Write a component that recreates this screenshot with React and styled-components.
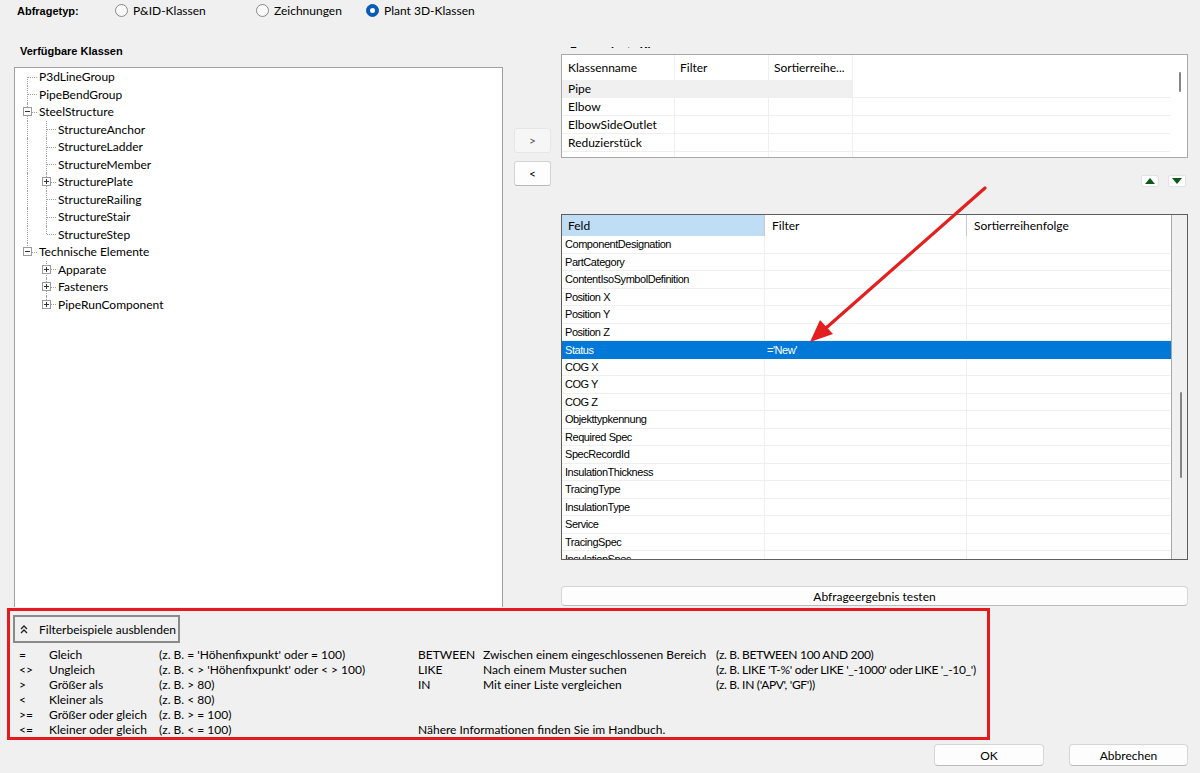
import React from 'react';
import styled, { createGlobalStyle } from 'styled-components';

const GlobalStyle = createGlobalStyle`
  html, body { margin: 0; padding: 0; background: #f0f0f0; }
  body { font-family: Lato, "Noto Sans", sans-serif; font-size: 12px; color: #000; }
  * { box-sizing: border-box; }
`;

const Window = styled.div`
  position: relative;
  width: 1200px;
  height: 773px;
  overflow: hidden;
  background: #f0f0f0;
  display: flex;
  flex-direction: column;
`;

/* ---------- Top bar ---------- */
const TopBar = styled.div`
  height: 21px;
  display: flex;
  align-items: center;
  padding-left: 17px;
`;
const BoldLabel = styled.span`
  font-family: "Liberation Sans", Arial, sans-serif;
  font-weight: 700;
  font-size: 11px;
  width: ${p => p.$w || 'auto'};
  flex: none;
`;
const RadioOption = styled.label`
  display: flex;
  align-items: center;
  gap: 5px;
  width: ${p => p.$w};
  flex: none;
  font-size: 12px;
`;
const RadioCircle = styled.span`
  width: 13px;
  height: 13px;
  border-radius: 50%;
  border: 1px solid ${p => (p.$checked ? '#0a5ab8' : '#8a8a8a')};
  background: ${p => (p.$checked ? '#0a5ab8' : '#f9f9f9')};
  display: flex;
  align-items: center;
  justify-content: center;
  &::after {
    content: '';
    width: 5px;
    height: 5px;
    border-radius: 50%;
    background: #fff;
    display: ${p => (p.$checked ? 'block' : 'none')};
  }
`;

/* ---------- Main grid ---------- */
const MainGrid = styled.div`
  margin-top: 15px;
  padding-left: 14px;
  display: grid;
  grid-template-columns: 489px 58px 627px;
  height: 571px;
`;
const LeftCol = styled.div`
  display: flex;
  flex-direction: column;
`;
const SectionLabel = styled.div`
  height: 31px;
  padding: 7px 0 0 6px;
`;
const TreeBox = styled.div`
  height: 540px;
  background: #fff;
  border: 1px solid #a0a0a0;
  border-bottom: none;
  padding-left: 3px;
  overflow: hidden;
`;
const TreeRow = styled.div`
  height: 17.5px;
  display: flex;
  align-items: stretch;
`;
const GuideCell = styled.span`
  position: relative;
  width: 19px;
  flex: none;
  &::before {
    content: '';
    position: absolute;
    left: 9px;
    top: 0;
    bottom: 0;
    border-left: 1px dotted #a0a0a0;
    display: ${p => (p.$line ? 'block' : 'none')};
  }
`;
const ConnectorCell = styled.span`
  position: relative;
  width: 19px;
  flex: none;
  display: flex;
  align-items: center;
  padding-left: 5px;
  &::before {
    content: '';
    position: absolute;
    left: 9px;
    top: ${p => (p.$first ? '50%' : '0')};
    bottom: ${p => (p.$last ? '50%' : '0')};
    border-left: 1px dotted #a0a0a0;
  }
  &::after {
    content: '';
    position: absolute;
    left: 10px;
    right: 0;
    top: 50%;
    border-top: 1px dotted #a0a0a0;
  }
`;
const Expander = styled.svg`
  position: relative;
  z-index: 1;
  width: 9px;
  height: 9px;
  display: block;
`;
const TreeText = styled.span`
  margin-left: 2px;
  display: flex;
  align-items: center;
  white-space: nowrap;
  font-size: 12px;
`;

const MidCol = styled.div`
  padding: 92px 0 0 11px;
  display: flex;
  flex-direction: column;
  gap: 8px;
`;
const MoveButton = styled.button`
  width: 37px;
  height: 25px;
  font-family: Lato, sans-serif;
  font-size: 12px;
  padding: 0;
  border-radius: 3px;
  background: ${p => (p.$disabled ? '#f6f6f6' : '#fdfdfd')};
  border: 1px solid ${p => (p.$disabled ? '#e6e6e6' : '#d4d4d4')};
  border-bottom-color: ${p => (p.$disabled ? '#e6e6e6' : '#b8b8b8')};
  color: ${p => (p.$disabled ? '#555' : '#000')};
`;

const RightCol = styled.div`
  display: flex;
  flex-direction: column;
`;
const HiddenLabelWrap = styled.div`
  height: 18px;
  padding: 9px 0 0 9px;
`;
const HiddenLabelClip = styled.div`
  height: 3px;
  overflow: hidden;
  font-family: "Liberation Sans", Arial, sans-serif;
  font-weight: 700;
  font-size: 11px;
  line-height: 14px;
  & > span { display: block; margin-top: -1px; }
`;

/* ---------- Tables ---------- */
const TableBox = styled.div`
  height: ${p => p.$h}px;
  margin-top: ${p => p.$mt || 0}px;
  background: #fff;
  border: 1px solid ${p => p.$border};
  display: flex;
  overflow: hidden;
  flex: none;
`;
const TableBody = styled.div`
  flex: 1;
  display: flex;
  flex-direction: column;
  overflow: hidden;
`;
const Row = styled.div`
  display: flex;
  flex: none;
  height: ${p => p.$h}px;
  border-bottom: ${p => (p.$line ? '1px solid #efefef' : 'none')};
`;
const Cell = styled.div`
  width: ${p => (p.$w ? `${p.$w}px` : 'auto')};
  flex: ${p => (p.$w ? 'none' : '1')};
  display: flex;
  align-items: center;
  padding-left: ${p => p.$pl || 3}px;
  white-space: nowrap;
  overflow: hidden;
  border-right: ${p => (p.$noline ? 'none' : `1px solid ${p.$lc || '#efefef'}`)};
  background: ${p => p.$bg || 'transparent'};
  color: ${p => p.$color || '#000'};
  font-family: ${p => (p.$narrow ? '"Liberation Sans", Arial, sans-serif' : 'Lato, sans-serif')};
  font-size: ${p => (p.$narrow ? '11px' : '12px')};
  letter-spacing: ${p => (p.$narrow ? '-0.45px' : '0')};
`;
const ScrollTrack = styled.div`
  width: ${p => p.$w}px;
  flex: none;
  background: ${p => p.$bg};
  border-left: ${p => (p.$edge ? '1px solid #a8a8a8' : 'none')};
  display: flex;
  flex-direction: column;
  align-items: center;
  padding-left: ${p => p.$pl || 0}px;
`;
const Thumb = styled.div`
  width: 2px;
  margin-top: ${p => p.$top}px;
  height: ${p => p.$h}px;
  background: #858585;
  border-radius: 1px;
`;

const OrderRow = styled.div`
  margin-top: 17px;
  height: 12px;
  display: flex;
  justify-content: flex-end;
  gap: 9px;
  padding-right: 2px;
  flex: none;
`;
const OrderButton = styled.button`
  width: 18px;
  height: 12px;
  padding: 0;
  border: 1px solid #e2e2e2;
  border-radius: 2px;
  background: #fdfdfd;
  display: flex;
  align-items: center;
  justify-content: center;
`;

const WideButton = styled.button`
  margin-top: 26px;
  height: 20px;
  width: 100%;
  flex: none;
  font-family: Lato, sans-serif;
  font-size: 12px;
  background: #fdfdfd;
  border: 1px solid #d6d6d6;
  border-bottom-color: #bcbcbc;
  border-radius: 4px;
  padding: 0;
`;

/* ---------- Filter examples ---------- */
const RedBox = styled.div`
  margin: 1px 0 0 7px;
  width: 983px;
  height: 132px;
  border: 3px solid #e31b1f;
  padding: 4px 0 0 3px;
  flex: none;
`;
const ToggleButton = styled.button`
  width: 167px;
  height: 28px;
  border: 2px solid #8a8a8a;
  background: #f0f0f0;
  font-family: Lato, sans-serif;
  font-size: 12px;
  display: flex;
  align-items: center;
  gap: 11px;
  padding: 0 0 0 5px;
`;
const ExampleGrid = styled.div`
  margin-top: 4px;
  padding-left: 6px;
  display: grid;
  grid-template-columns: 30px 110px 259px 65px 233px auto;
  grid-auto-rows: 15px;
  line-height: 15px;
  font-size: 12px;
  white-space: nowrap;
`;
const ExampleText = styled.span`
  letter-spacing: ${p => (p.$tight ? '-0.3px' : '0')};
`;
const Span3 = styled.span`
  grid-column: 4 / span 3;
`;

const Footer = styled.div`
  margin-top: 4px;
  display: flex;
  justify-content: flex-end;
  gap: 25px;
  padding-right: 12px;
`;
const DialogButton = styled.button`
  width: ${p => p.$w}px;
  height: 22px;
  font-family: Lato, sans-serif;
  font-size: 12px;
  background: #fdfdfd;
  border: 1px solid #d6d6d6;
  border-bottom-color: #bcbcbc;
  border-radius: 4px;
  padding: 0;
`;

const ArrowOverlay = styled.svg`
  position: absolute;
  left: 0;
  top: 0;
  width: 1200px;
  height: 773px;
  pointer-events: none;
`;

/* ---------- Data ---------- */
const tree = [
  { label: 'P3dLineGroup', level: 0, first: true },
  { label: 'PipeBendGroup', level: 0 },
  { label: 'SteelStructure', level: 0, exp: '-' },
  { label: 'StructureAnchor', level: 1 },
  { label: 'StructureLadder', level: 1 },
  { label: 'StructureMember', level: 1 },
  { label: 'StructurePlate', level: 1, exp: '+' },
  { label: 'StructureRailing', level: 1 },
  { label: 'StructureStair', level: 1 },
  { label: 'StructureStep', level: 1, last: true },
  { label: 'Technische Elemente', level: 0, exp: '-', last: true },
  { label: 'Apparate', level: 1, exp: '+', parentLast: true },
  { label: 'Fasteners', level: 1, exp: '+', parentLast: true },
  { label: 'PipeRunComponent', level: 1, exp: '+', parentLast: true, last: true },
];

const classes = ['Pipe', 'Elbow', 'ElbowSideOutlet', 'Reduzierstück', ''];

const fields = [
  'ComponentDesignation', 'PartCategory', 'ContentIsoSymbolDefinition', 'Position X',
  'Position Y', 'Position Z', 'Status', 'COG X', 'COG Y', 'COG Z', 'Objekttypkennung',
  'Required Spec', 'SpecRecordId', 'InsulationThickness', 'TracingType', 'InsulationType',
  'Service', 'TracingSpec', 'InsulationSpec',
];

const examples = [
  ['=', 'Gleich', "(z. B. = 'Höhenfixpunkt' oder = 100)", 'BETWEEN', 'Zwischen einem eingeschlossenen Bereich', '(z. B. BETWEEN 100 AND 200)'],
  ['<>', 'Ungleich', "(z. B. < > 'Höhenfixpunkt' oder < > 100)", 'LIKE', 'Nach einem Muster suchen', "(z. B. LIKE 'T-%' oder LIKE '_-1000' oder LIKE '_-10_')"],
  ['>', 'Größer als', '(z. B. > 80)', 'IN', 'Mit einer Liste vergleichen', "(z. B. IN ('APV', 'GF'))"],
  ['<', 'Kleiner als', '(z. B. < 80)', '', '', ''],
  ['>=', 'Größer oder gleich', '(z. B. > = 100)', '', '', ''],
];

function ExpanderIcon({ type }) {
  return (
    <Expander viewBox="0 0 9 9">
      <rect x="0.5" y="0.5" width="8" height="8" fill="#fff" stroke="#9a9a9a" />
      <line x1="2" y1="4.5" x2="7" y2="4.5" stroke="#333" />
      {type === '+' && <line x1="4.5" y1="2" x2="4.5" y2="7" stroke="#333" />}
    </Expander>
  );
}

function Radio({ checked, label, w }) {
  return (
    <RadioOption $w={w}>
      <RadioCircle $checked={checked} />
      {label}
    </RadioOption>
  );
}

export default function App() {
  return (
    <Window>
      <GlobalStyle />
      <TopBar>
        <BoldLabel $w="98px">Abfragetyp:</BoldLabel>
        <Radio label="P&ID-Klassen" w="141px" />
        <Radio label="Zeichnungen" w="110px" />
        <Radio label="Plant 3D-Klassen" checked w="auto" />
      </TopBar>

      <MainGrid>
        <LeftCol>
          <SectionLabel>
            <BoldLabel>Verfügbare Klassen</BoldLabel>
          </SectionLabel>
          <TreeBox>
            {tree.map(item => (
              <TreeRow key={item.label}>
                {item.level === 1 && <GuideCell $line={!item.parentLast} />}
                <ConnectorCell $first={item.first} $last={item.last}>
                  {item.exp && <ExpanderIcon type={item.exp} />}
                </ConnectorCell>
                <TreeText>{item.label}</TreeText>
              </TreeRow>
            ))}
          </TreeBox>
        </LeftCol>

        <MidCol>
          <MoveButton $disabled>&gt;</MoveButton>
          <MoveButton>&lt;</MoveButton>
        </MidCol>

        <RightCol>
          <HiddenLabelWrap>
            <HiddenLabelClip>
              <span>Zugeordnete Klassen</span>
            </HiddenLabelClip>
          </HiddenLabelWrap>

          <TableBox $h={104} $border="#a8a8a8">
            <TableBody>
              <Row $h={25}>
                <Cell $w={113} $pl={6}>Klassenname</Cell>
                <Cell $w={94} $pl={5}>Filter</Cell>
                <Cell $w={84} $pl={5}>Sortierreihe...</Cell>
                <Cell $noline />
              </Row>
              {classes.map((c, i) => (
                <Row key={i} $h={18} $line>
                  <Cell $w={113} $pl={6} $bg={i === 0 ? '#f0f0f0' : undefined}>{c}</Cell>
                  <Cell $w={94} $bg={i === 0 ? '#f0f0f0' : undefined} />
                  <Cell $w={84} $bg={i === 0 ? '#f0f0f0' : undefined} />
                  <Cell $noline />
                </Row>
              ))}
            </TableBody>
            <ScrollTrack $w={17} $bg="#fff" $pl={2}>
              <Thumb $top={17} $h={20} />
            </ScrollTrack>
          </TableBox>

          <OrderRow>
            <OrderButton aria-label="nach oben">
              <svg width="10" height="6" viewBox="0 0 10 6"><polygon points="5,0 10,6 0,6" fill="#0d5a17" /></svg>
            </OrderButton>
            <OrderButton aria-label="nach unten">
              <svg width="10" height="6" viewBox="0 0 10 6"><polygon points="0,0 10,0 5,6" fill="#0d5a17" /></svg>
            </OrderButton>
          </OrderRow>

          <TableBox $h={346} $mt={27} $border="#5e5e5e">
            <TableBody>
              <Row $h={21}>
                <Cell $w={203} $pl={6} $bg="#bfddf5" $lc="#c9c9c9">Feld</Cell>
                <Cell $w={202} $pl={7} $lc="#c9c9c9">Filter</Cell>
                <Cell $w={204} $pl={7} $noline>Sortierreihenfolge</Cell>
              </Row>
              {fields.map(f => {
                const sel = f === 'Status';
                return (
                  <Row key={f} $h={17.5} $line={!sel}>
                    <Cell $w={203} $narrow $bg={sel ? '#0078d7' : undefined} $color={sel ? '#fff' : undefined} $lc={sel ? '#0078d7' : undefined}>{f}</Cell>
                    <Cell $w={202} $narrow $pl={2} $bg={sel ? '#0078d7' : undefined} $color={sel ? '#fff' : undefined} $lc={sel ? '#0078d7' : undefined}>{sel ? "='New'" : ''}</Cell>
                    <Cell $w={204} $narrow $bg={sel ? '#0078d7' : undefined} $noline />
                  </Row>
                );
              })}
            </TableBody>
            <ScrollTrack $w={16} $bg="#f0f0f0" $edge $pl={2}>
              <Thumb $top={177} $h={86} />
            </ScrollTrack>
          </TableBox>

          <WideButton>Abfrageergebnis testen</WideButton>
        </RightCol>
      </MainGrid>

      <RedBox>
        <ToggleButton>
          <svg width="8" height="9" viewBox="0 0 8 9">
            <polyline points="1,4 4,1 7,4" fill="none" stroke="#222" strokeWidth="1.3" />
            <polyline points="1,8 4,5 7,8" fill="none" stroke="#222" strokeWidth="1.3" />
          </svg>
          Filterbeispiele ausblenden
        </ToggleButton>
        <ExampleGrid>
          {examples.map((r, i) =>
            r.map((t, j) => (
              <ExampleText key={`${i}-${j}`} $tight={j === 5}>{t}</ExampleText>
            ))
          )}
          <ExampleText>&lt;=</ExampleText>
          <ExampleText>Kleiner oder gleich</ExampleText>
          <ExampleText>(z. B. &lt; = 100)</ExampleText>
          <Span3>Nähere Informationen finden Sie im Handbuch.</Span3>
        </ExampleGrid>
      </RedBox>

      <Footer>
        <DialogButton $w={110}>OK</DialogButton>
        <DialogButton $w={119}>Abbrechen</DialogButton>
      </Footer>

      <ArrowOverlay viewBox="0 0 1200 773">
        <line x1="985" y1="188" x2="826" y2="328" stroke="#e3201f" strokeWidth="3.2" strokeLinecap="round" />
        <polygon points="810,342 833,334 820,320" fill="#e3201f" />
      </ArrowOverlay>
    </Window>
  );
}
